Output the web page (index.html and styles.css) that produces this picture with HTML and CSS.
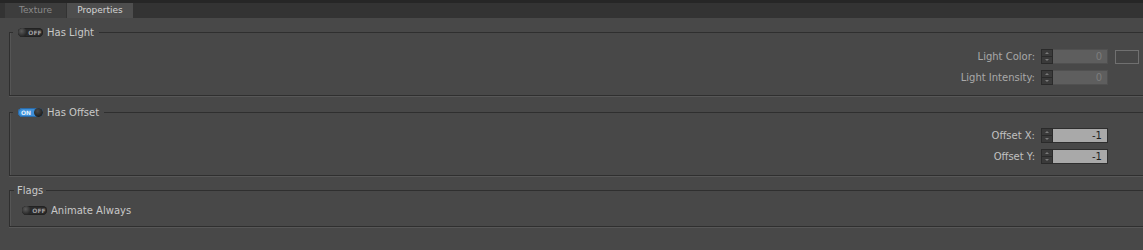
FILE: index.html
```html
<!DOCTYPE html>
<html>
<head>
<meta charset="utf-8">
<link rel="stylesheet" href="styles.css">
</head>
<body>
<div class="topline"></div>
<div class="tabs">
  <div class="tab">Texture</div>
  <div class="tab active">Properties</div>
</div>
<div class="content">
  <fieldset class="group">
    <legend class="legend"><span class="toggle off"><span class="knob"></span><span class="tlabel">OFF</span></span><span class="ltext">Has Light</span></legend>
    <div class="rows">
      <div class="row disabled">
        <span class="label">Light Color:</span>
        <span class="spin"><span class="up"></span><span class="down"></span></span>
        <span class="input">0</span>
        <span class="swatch"></span>
      </div>
      <div class="row disabled">
        <span class="label">Light Intensity:</span>
        <span class="spin"><span class="up"></span><span class="down"></span></span>
        <span class="input">0</span>
        <span class="swatch blank"></span>
      </div>
    </div>
  </fieldset>
  <fieldset class="group">
    <legend class="legend"><span class="toggle on"><span class="tlabel">ON</span><span class="knob"></span></span><span class="ltext">Has Offset</span></legend>
    <div class="rows second">
      <div class="row">
        <span class="label">Offset X:</span>
        <span class="spin"><span class="up"></span><span class="down"></span></span>
        <span class="input">-1</span>
        <span class="swatch blank"></span>
      </div>
      <div class="row">
        <span class="label">Offset Y:</span>
        <span class="spin"><span class="up"></span><span class="down"></span></span>
        <span class="input">-1</span>
        <span class="swatch blank"></span>
      </div>
    </div>
  </fieldset>
  <fieldset class="group flags">
    <legend class="legend plain">Flags</legend>
    <div class="flagrow"><span class="toggle off"><span class="knob"></span><span class="tlabel">OFF</span></span><span class="ltext">Animate Always</span></div>
  </fieldset>
</div>
</body>
</html>
```
FILE: styles.css
```css
html, body {
  margin: 0;
  padding: 0;
  background: #484848;
  font-family: "DejaVu Sans", Verdana, sans-serif;
  font-size: 10px;
  color: #c4c4c4;
  overflow: hidden;
}
.topline {
  height: 3px;
  background: #262626;
}
.tabs {
  height: 15px;
  background: #333333;
  display: flex;
  padding-left: 5px;
  gap: 1px;
}
.tab {
  width: 61px;
  height: 15px;
  background: #3d3d3d;
  color: #8a8a8a;
  text-align: center;
  line-height: 15px;
  font-size: 9px;
}
.tab.active {
  width: 66px;
  background: #4e4e4e;
  color: #d4d4d4;
}
.content {
  padding: 7px 0 0 9px;
}
.group {
  margin: 0 0 9px 0;
  padding: 3px 4px 10px 0;
  border: 1px solid #2f2f2f;
  border-right: none;
  box-shadow: 0 1px 0 #575757, inset 1px 0 0 #555;
  min-width: 0;
}
.legend {
  padding: 0 5px 0 5px;
  margin-left: 3px;
  display: flex;
  align-items: center;
  height: 14px;
}
.legend.plain {
  margin-left: 4px;
  padding: 0 3px;
  font-size: 10px;
  color: #c8c8c8;
}
.ltext {
  margin-left: 4px;
  color: #c8c8c8;
}
.toggle {
  width: 25px;
  height: 9px;
  border-radius: 5px;
  display: flex;
  align-items: center;
  position: relative;
  box-sizing: border-box;
}
.toggle.off {
  background: #2b2b2b;
  box-shadow: inset 0 0 0 1px #222;
}
.toggle.on {
  background: #3d8fd8;
  box-shadow: inset 0 0 0 1px #2a6aa8;
}
.knob {
  width: 9px;
  height: 9px;
  border-radius: 50%;
  background: radial-gradient(circle at 40% 35%, #5a5a5a, #262626 70%);
  flex: none;
}
.toggle.on .knob {
  background: radial-gradient(circle at 40% 35%, #4a4a4a, #1f1f1f 70%);
}
.tlabel {
  font-family: "DejaVu Sans", sans-serif;
  font-size: 6px;
  font-weight: bold;
  color: #a0a0a0;
  flex: 1;
  text-align: center;
}
.toggle.on .tlabel {
  color: #e0f0ff;
}
.rows {
  display: flex;
  flex-direction: column;
  gap: 6px;
  padding-top: 7px;
}
.rows.second {
  padding-top: 6px;
  padding-bottom: 1px;
}
.row {
  display: flex;
  justify-content: flex-end;
  align-items: center;
  height: 15px;
}
.label {
  margin-right: 6px;
  color: #c0c0c0;
}
.row.disabled .label {
  color: #a8a8a8;
}
.spin {
  width: 12px;
  height: 15px;
  display: flex;
  flex-direction: column;
  background: #3a3a3a;
  box-sizing: border-box;
  border: 1px solid #2a2a2a;
}
.spin .up, .spin .down {
  flex: 1;
  position: relative;
}
.spin .up {
  border-bottom: 1px solid #2a2a2a;
}
.spin .up::after, .spin .down::after {
  content: "";
  position: absolute;
  left: 3px;
  width: 0;
  height: 0;
  border-left: 2px solid transparent;
  border-right: 2px solid transparent;
}
.spin .up::after {
  top: 2px;
  border-bottom: 2px solid #7a7a7a;
}
.spin .down::after {
  top: 2px;
  border-top: 2px solid #7a7a7a;
}
.input {
  width: 55px;
  height: 15px;
  box-sizing: border-box;
  background: #a9a9a9;
  color: #1e1e1e;
  text-align: right;
  padding-right: 5px;
  line-height: 13px;
  border: 1px solid #2e2e2e;
  border-left: none;
}
.row.disabled .input {
  background: #5e5e5e;
  color: #7c7c7c;
  border-color: #505050;
}
.swatch {
  width: 24px;
  height: 14px;
  margin-left: 7px;
  box-sizing: border-box;
  border: 1px solid #707070;
  background: #474747;
}
.swatch.blank {
  border: none;
  background: transparent;
}
.flags {
  margin-top: -2px;
  padding-top: 2px;
  padding-bottom: 8px;
}
.flagrow {
  display: flex;
  align-items: center;
  padding-left: 12px;
  padding-top: 4px;
  height: 15px;
}
```
